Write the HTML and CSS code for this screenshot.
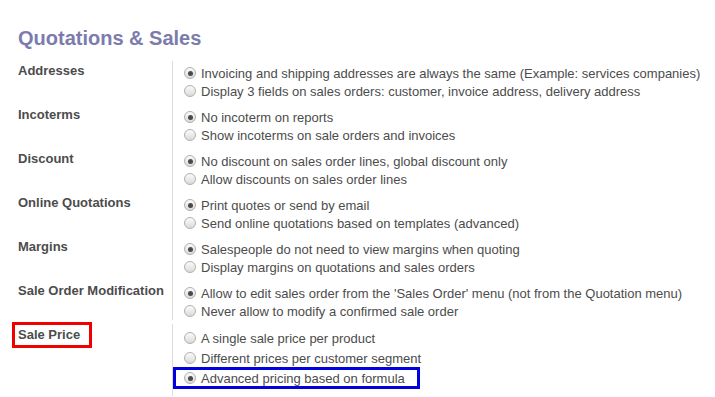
FILE: index.html
```html
<!DOCTYPE html>
<html>
<head>
<meta charset="utf-8">
<link rel="stylesheet" href="styles.css">
</head>
<body>
<div class="page">
  <h1 class="title">Quotations &amp; Sales</h1>
  <div class="settings">
    <div class="row">
      <div class="label">Addresses</div>
      <div class="options">
        <label class="opt"><input type="radio" name="a" checked><span>Invoicing and shipping addresses are always the same (Example: services companies)</span></label>
        <label class="opt"><input type="radio" name="a"><span>Display 3 fields on sales orders: customer, invoice address, delivery address</span></label>
      </div>
    </div>
    <div class="row">
      <div class="label">Incoterms</div>
      <div class="options">
        <label class="opt"><input type="radio" name="b" checked><span>No incoterm on reports</span></label>
        <label class="opt"><input type="radio" name="b"><span>Show incoterms on sale orders and invoices</span></label>
      </div>
    </div>
    <div class="row">
      <div class="label">Discount</div>
      <div class="options">
        <label class="opt"><input type="radio" name="c" checked><span>No discount on sales order lines, global discount only</span></label>
        <label class="opt"><input type="radio" name="c"><span>Allow discounts on sales order lines</span></label>
      </div>
    </div>
    <div class="row">
      <div class="label">Online Quotations</div>
      <div class="options">
        <label class="opt"><input type="radio" name="d" checked><span>Print quotes or send by email</span></label>
        <label class="opt"><input type="radio" name="d"><span>Send online quotations based on templates (advanced)</span></label>
      </div>
    </div>
    <div class="row">
      <div class="label">Margins</div>
      <div class="options">
        <label class="opt"><input type="radio" name="e" checked><span>Salespeople do not need to view margins when quoting</span></label>
        <label class="opt"><input type="radio" name="e"><span>Display margins on quotations and sales orders</span></label>
      </div>
    </div>
    <div class="row last">
      <div class="label">Sale Order Modification</div>
      <div class="options">
        <label class="opt"><input type="radio" name="f" checked><span>Allow to edit sales order from the 'Sales Order' menu (not from the Quotation menu)</span></label>
        <label class="opt"><input type="radio" name="f"><span>Never allow to modify a confirmed sale order</span></label>
      </div>
    </div>
  </div>
  <div class="settings price">
    <div class="row">
      <div class="label"><span class="mark-red">Sale Price</span></div>
      <div class="options">
        <label class="opt"><input type="radio" name="g"><span>A single sale price per product</span></label>
        <label class="opt"><input type="radio" name="g"><span>Different prices per customer segment</span></label>
        <label class="opt mark-blue"><input type="radio" name="g" checked><span>Advanced pricing based on formula</span></label>
      </div>
    </div>
  </div>
</div>
</body>
</html>
```

FILE: styles.css
```css
html, body {
  margin: 0;
  padding: 0;
  background: #fff;
}
body {
  font-family: "Liberation Sans", Arial, sans-serif;
  font-size: 13px;
  color: #4c4c4c;
}
.page {
  padding-left: 18px;
}
.title {
  margin: 26px 0 11px 0;
  font-size: 20px;
  line-height: 24px;
  font-weight: bold;
  color: #7c7bad;
}
.row {
  display: grid;
  grid-template-columns: 154px 1fr;
}
.label {
  font-weight: bold;
  line-height: 18px;
  padding-top: 1px;
  color: #4c4c4c;
}
.options {
  border-left: 1px solid #dcdcdc;
  padding: 3px 0 5px 0;
  display: flex;
  flex-direction: column;
  align-items: flex-start;
}
.row.last .options {
  padding-bottom: 0;
}
.opt {
  display: flex;
  align-items: center;
  height: 18px;
  padding-left: 11px;
  gap: 5px;
  white-space: nowrap;
}
.opt input {
  appearance: none;
  -webkit-appearance: none;
  margin: 0;
  width: 12px;
  height: 12px;
  border-radius: 50%;
  border: 1px solid #b0b0b0;
  background: linear-gradient(#fbfbfb, #dadada);
  box-sizing: border-box;
  display: grid;
  place-content: center;
  flex: none;
}
.opt input:checked::after {
  content: "";
  width: 5px;
  height: 5px;
  border-radius: 50%;
  background: #4a4a4a;
}
.price {
  margin-top: 4px;
}
.price .label {
  padding-top: 0;
  margin-top: -2px;
}
.price .options {
  padding: 4px 0 8px 0;
}
.price .opt {
  height: 20px;
}
.mark-red {
  display: inline-block;
  margin-left: -6px;
  border: 3px solid #f00000;
  padding: 0 9px 0 3px;
  line-height: 20px;
}
.mark-blue {
  margin-left: 1px;
  padding-left: 10px;
  padding-right: 14px;
  outline: 3px solid #0000e0;
  outline-offset: -2px;
}
```
